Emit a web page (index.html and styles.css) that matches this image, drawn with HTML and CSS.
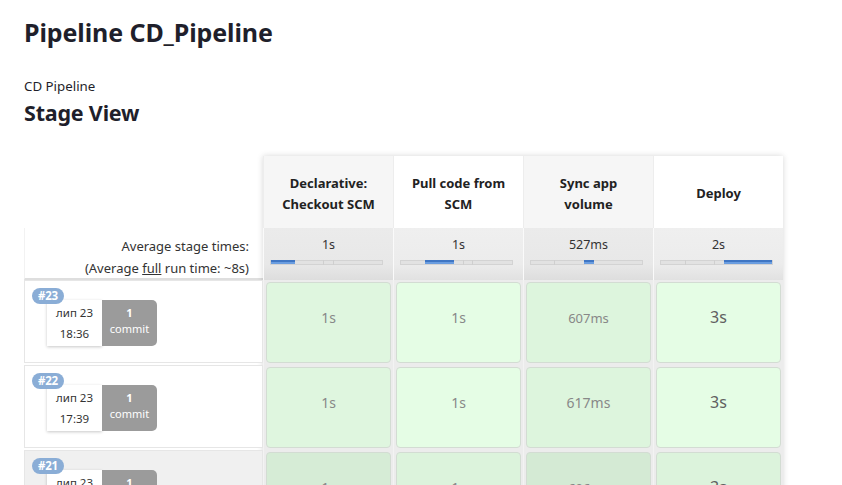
FILE: index.html
```html
<!DOCTYPE html>
<html>
<head>
<meta charset="utf-8">
<link rel="stylesheet" href="styles.css">
</head>
<body>
<div class="page">
  <h1 class="title">Pipeline CD_Pipeline</h1>
  <div class="desc">CD Pipeline</div>
  <h2 class="subtitle">Stage View</h2>

  <div class="stage-view">
    <div class="left-col">
      <div class="left-head"></div>
      <div class="left-avg">
        <div>Average stage times:</div>
        <div>(Average <u>full</u> run time: ~8s)</div>
      </div>
      <div class="build">
        <span class="badge">#23</span>
        <div class="build-info">
          <div class="date"><div>лип 23</div><div>18:36</div></div>
          <div class="commit"><b>1</b><span>commit</span></div>
        </div>
      </div>
      <div class="build">
        <span class="badge">#22</span>
        <div class="build-info">
          <div class="date"><div>лип 23</div><div>17:39</div></div>
          <div class="commit"><b>1</b><span>commit</span></div>
        </div>
      </div>
      <div class="build build-alt">
        <span class="badge">#21</span>
        <div class="build-info">
          <div class="date"><div>лип 23</div><div>17:20</div></div>
          <div class="commit"><b>1</b><span>commit</span></div>
        </div>
      </div>
    </div>

    <div class="stages">
      <div class="head odd">Declarative:<br>Checkout SCM</div>
      <div class="head">Pull code from<br>SCM</div>
      <div class="head odd">Sync app<br>volume</div>
      <div class="head">Deploy</div>

      <div class="avg odd"><div class="avg-time">1s</div><div class="track"><i class="div" style="left:47%"></i><i class="div" style="left:56%"></i><span class="fill" style="left:0;width:22%"></span></div></div>
      <div class="avg"><div class="avg-time">1s</div><div class="track"><i class="div" style="left:56%"></i><i class="div" style="left:64%"></i><span class="fill" style="left:22%;width:26%"></span></div></div>
      <div class="avg odd"><div class="avg-time">527ms</div><div class="track"><i class="div" style="left:21%"></i><i class="div" style="left:48%"></i><span class="fill" style="left:48%;width:9%"></span></div></div>
      <div class="avg"><div class="avg-time">2s</div><div class="track"><i class="div" style="left:22%"></i><i class="div" style="left:48%"></i><span class="fill" style="left:57%;width:43%"></span></div></div>

      <div class="cell odd"><div class="box c1"><span class="t14">1s</span></div></div>
      <div class="cell"><div class="box c2"><span class="t14">1s</span></div></div>
      <div class="cell odd"><div class="box c3"><span class="t13">607ms</span></div></div>
      <div class="cell"><div class="box c4"><span class="t16">3s</span></div></div>

      <div class="cell odd"><div class="box c1"><span class="t14">1s</span></div></div>
      <div class="cell"><div class="box c2"><span class="t14">1s</span></div></div>
      <div class="cell odd"><div class="box c3"><span class="t14">617ms</span></div></div>
      <div class="cell"><div class="box c4"><span class="t16">3s</span></div></div>

      <div class="cell odd alt"><div class="box c1"><span class="t14">1s</span></div></div>
      <div class="cell alt"><div class="box c2"><span class="t14">1s</span></div></div>
      <div class="cell odd alt"><div class="box c3"><span class="t13">606ms</span></div></div>
      <div class="cell alt"><div class="box c4"><span class="t16">3s</span></div></div>
    </div>
  </div>
</div>
</body>
</html>
```
FILE: styles.css
```css
* { box-sizing: border-box; }
html, body { margin: 0; padding: 0; background: #fff; }
body {
  font-family: "Noto Sans", "Open Sans", sans-serif;
  color: #1f1f2b;
  overflow: hidden;
  height: 485px;
}
.page { padding: 14px 0 0 24px; }
.title {
  margin: 0;
  font-size: 25px;
  font-weight: 700;
  line-height: 36px;
  letter-spacing: -0.1px;
}
.desc {
  margin-top: 27px;
  font-size: 13.3px;
  line-height: 18px;
}
.subtitle {
  margin: 5px 0 0 0;
  font-size: 21.5px;
  font-weight: 700;
  line-height: 26px;
  letter-spacing: -0.2px;
}
.stage-view {
  margin-top: 30px;
  display: flex;
  align-items: flex-start;
}
.left-col { width: 239px; display: flex; flex-direction: column; }
.left-head { height: 72px; }
.left-avg {
  height: 52px;
  text-align: right;
  padding: 7px 14px 0 0;
  font-size: 13px;
  line-height: 22px;
  color: #333;
  border-left: 1px solid #f2f2f2;
  border-bottom: 2px solid #dedede;
}
.build {
  position: relative;
  height: 83px;
  margin-bottom: 2px;
  border: 1px solid #e6e6e6;
  background: #fff;
}
.build-alt { background: #f0f0f0; }
.badge {
  position: absolute;
  left: 7px;
  top: 7px;
  height: 16px;
  padding: 0 6px;
  border-radius: 8px;
  background: #8aadd6;
  color: #fff;
  font-size: 11.5px;
  font-weight: 700;
  line-height: 16px;
  letter-spacing: -0.3px;
  z-index: 1;
}
.build-info {
  display: flex;
  margin: 19px 0 0 22px;
}
.date {
  width: 55px;
  height: 46px;
  background: #fff;
  box-shadow: 0 1px 3px rgba(0,0,0,0.22);
  text-align: center;
  font-size: 11.5px;
  line-height: 21px;
  color: #333;
  padding-top: 2px;
}
.commit {
  width: 55px;
  height: 46px;
  background: #9b9b9b;
  border-radius: 0 5px 5px 0;
  color: #fff;
  display: flex;
  flex-direction: column;
  align-items: center;
  font-size: 11px;
  line-height: 16px;
  padding-top: 5px;
}
.stages {
  display: grid;
  grid-template-columns: repeat(4, 130px);
  grid-template-rows: 72px 52px 85px 85px 85px;
  box-shadow: 0 0 6px rgba(0,0,0,0.16);
  background: #ededed;
}
.head {
  background: #fff;
  display: flex;
  align-items: center;
  justify-content: center;
  text-align: center;
  font-size: 13px;
  font-weight: 700;
  line-height: 21px;
  color: #222;
  border-left: 1px solid #ededed;
  padding-top: 3px;
}
.head.odd { background: #f6f6f6; }
.avg {
  background: linear-gradient(#efefef 0%, #ececec 70%, #e1e1e1 100%);
  border-left: 1px solid #fafafa;
  padding-top: 8px;
}
.avg.odd { background: linear-gradient(#ebebeb 0%, #e8e8e8 70%, #dddddd 100%); }
.avg-time {
  text-align: center;
  font-size: 12.5px;
  line-height: 18px;
  color: #333;
}
.track {
  position: relative;
  margin: 6px 0 0 6px;
  width: 113px;
  height: 5px;
  background: #e2e2e2;
  border: 1px solid #d3d3d3;
}
.track .div {
  position: absolute;
  top: -1px;
  width: 1px;
  height: 5px;
  background: #cfcfcf;
}
.fill {
  position: absolute;
  top: -1px;
  height: 4px;
  background: linear-gradient(#3f76c4 0 50%, #6a9de0 50%);
}
.cell {
  background: #ececec;
  padding: 2px;
  border-left: 1px solid #f3f3f3;
}
.box {
  height: 81px;
  border: 1px solid #d3dcd3;
  border-radius: 4px;
  text-align: center;
  padding-top: 23px;
  color: #888;
}
.c1 { background: #dff6df; }
.c2 { background: #e5fde5; }
.c3 { background: #ddf5dd; }
.c4 { background: #e5fde5; }
.alt .c1 { background: #d6ecd6; }
.alt .c2 { background: #dcf3dc; }
.alt .c3 { background: #d4ead4; }
.alt .c4 { background: #dcf3dc; }
.t13 { font-size: 13px; line-height: 22px; }
.t14 { font-size: 14px; line-height: 22px; }
.t16 { font-size: 16px; line-height: 22px; color: #606060; }
```
